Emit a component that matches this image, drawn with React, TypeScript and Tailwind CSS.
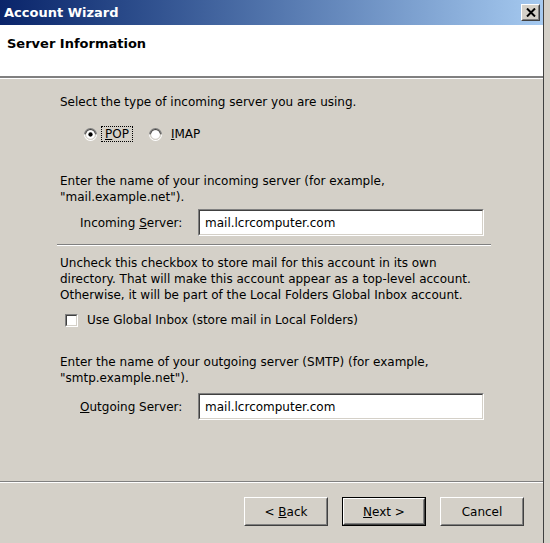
import React from 'react';

const font = { fontFamily: '"DejaVu Sans", Verdana, sans-serif' };

function Radio({ checked }: { checked?: boolean }) {
  return (
    <svg width="13" height="13" viewBox="0 0 12 12" className="shrink-0">
      <path d="M0.5 6 A5.5 5.5 0 0 1 11.5 6" fill="none" stroke="#808080" />
      <path d="M11.5 6 A5.5 5.5 0 0 1 0.5 6" fill="none" stroke="#ffffff" />
      <path d="M1.5 6 A4.5 4.5 0 0 1 10.5 6" fill="none" stroke="#404040" />
      <path d="M10.5 6 A4.5 4.5 0 0 1 1.5 6" fill="none" stroke="#d4d0c8" />
      <circle cx="6" cy="6" r="4" fill="#ffffff" />
      {checked && <circle cx="6" cy="6" r="2" fill="#000000" />}
    </svg>
  );
}

function Sunken({ className, children }: { className?: string; children?: React.ReactNode }) {
  return (
    <div className={`border border-t-[#808080] border-l-[#808080] border-b-white border-r-white ${className ?? ''}`}>
      <div className="h-full border border-t-[#404040] border-l-[#404040] border-b-[#d4d0c8] border-r-[#d4d0c8] bg-white">
        {children}
      </div>
    </div>
  );
}

function TextField({ value }: { value: string }) {
  return (
    <Sunken className="w-[286px] h-[27px]">
      <div className="h-full flex items-center pl-[5px] text-[12px] text-black">{value}</div>
    </Sunken>
  );
}

function Button({ children, isDefault }: { children: React.ReactNode; isDefault?: boolean }) {
  return (
    <div className={`w-[84px] h-[29px] ${isDefault ? 'border border-black' : ''}`}>
      <div className="h-full border border-t-white border-l-white border-b-[#404040] border-r-[#404040] bg-[#d4d0c8]">
        <div className="h-full flex items-center justify-center whitespace-pre border border-t-[#d4d0c8] border-l-[#d4d0c8] border-b-[#808080] border-r-[#808080] text-[12px] text-black">
          {children}
        </div>
      </div>
    </div>
  );
}

export default function App() {
  return (
    <div className="w-[550px] h-[543px] bg-[#d4d0c8] flex overflow-hidden" style={font}>
      <div className="w-[544px] h-full flex flex-col border-r border-r-[#404040]">
        <div className="h-[25px] shrink-0 flex items-center justify-between bg-gradient-to-r from-[#0a246a] to-[#a6caf0] pl-[4px] pr-[3px]">
          <span className="text-white font-bold text-[13px] leading-none">Account Wizard</span>
          <div className="w-[19px] h-[17px] border border-t-white border-l-white border-b-[#404040] border-r-[#404040] bg-[#d4d0c8]">
            <div className="h-full flex items-center justify-center border border-t-[#d4d0c8] border-l-[#d4d0c8] border-b-[#808080] border-r-[#808080]">
              <svg width="10" height="9" viewBox="0 0 10 9">
                <path d="M1 0.5 L9 8.5 M9 0.5 L1 8.5" stroke="#000" strokeWidth="2" />
              </svg>
            </div>
          </div>
        </div>

        <div className="h-[53px] shrink-0 bg-white border-b-2 border-b-[#808080] pl-[7px] pt-[9px]">
          <div className="font-bold text-[13px] text-black">Server Information</div>
        </div>
        <div className="h-px bg-white shrink-0" />

        <div className="flex-1 pl-[57px] text-[12px] text-black leading-[16px]">
          <div className="pl-[3px] mt-[15px]">Select the type of incoming server you are using.</div>

          <div className="mt-[16px] h-[16px] flex items-center pl-[27px]">
            <Radio checked />
            <span className="ml-[4px] px-[3px] border border-dotted border-black leading-[14px]">
              <span className="underline">P</span>OP
            </span>
            <span className="ml-[16px]"><Radio /></span>
            <span className="ml-[9px]">
              <span className="underline">I</span>MAP
            </span>
          </div>

          <div className="pl-[3px] mt-[31px]">
            Enter the name of your incoming server (for example,
            <br />
            "mail.example.net").
          </div>

          <div className="mt-[4px] flex items-center">
            <div className="w-[141px] pl-[23px]">
              Incoming <span className="underline">S</span>erver:
            </div>
            <TextField value="mail.lcrcomputer.com" />
          </div>

          <div className="mt-[8px] w-[434px] border-t border-t-[#808080] border-b border-b-white" />

          <div className="pl-[3px] mt-[9px]">
            Uncheck this checkbox to store mail for this account in its own
            <br />
            directory. That will make this account appear as a top-level account.
            <br />
            Otherwise, it will be part of the Local Folders Global Inbox account.
          </div>

          <div className="mt-[9px] h-[16px] flex items-center pl-[8px]">
            <Sunken className="w-[13px] h-[13px]" />
            <span className="ml-[9px]">Use Global Inbox (store mail in Local Folders)</span>
          </div>

          <div className="pl-[3px] mt-[26px]">
            Enter the name of your outgoing server (SMTP) (for example,
            <br />
            "smtp.example.net").
          </div>

          <div className="mt-[7px] flex items-center">
            <div className="w-[141px] pl-[23px]">
              <span className="underline">O</span>utgoing Server:
            </div>
            <TextField value="mail.lcrcomputer.com" />
          </div>
        </div>

        <div className="h-[62px] shrink-0 border-t border-t-[#808080]">
          <div className="h-full border-t border-t-white flex justify-end items-start pt-[14px] pr-[19px] gap-[14px]">
            <Button>
              {'< '}
              <span className="underline">B</span>ack
            </Button>
            <Button isDefault>
              <span className="underline">N</span>
              {'ext >'}
            </Button>
            <Button>Cancel</Button>
          </div>
        </div>
      </div>
    </div>
  );
}
